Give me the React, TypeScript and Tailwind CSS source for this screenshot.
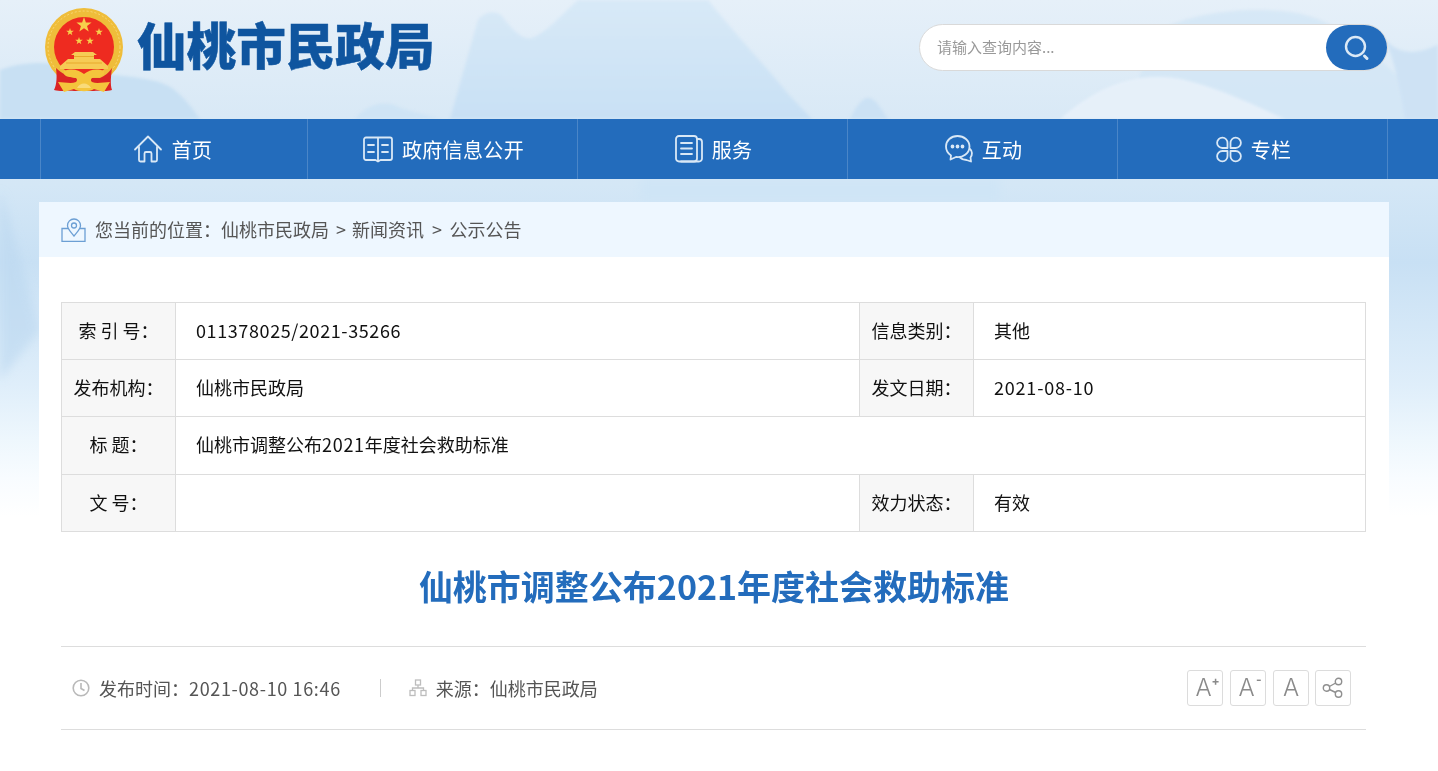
import type { ReactNode } from "react";

const font = "font-['Noto_Sans_CJK_SC','Noto_Sans',sans-serif]";

function Backdrop() {
  return (
    <svg className="absolute left-0 top-0 -z-10" width="1438" height="771" viewBox="0 0 1438 771">
      <defs>
        <linearGradient id="sky" x1="0" y1="0" x2="0" y2="1">
          <stop offset="0" stopColor="#e6f0f9" />
          <stop offset="0.15" stopColor="#d9e9f6" />
          <stop offset="0.24" stopColor="#d4e7f6" />
          <stop offset="0.34" stopColor="#c8e0f4" />
          <stop offset="0.5" stopColor="#dfeefa" />
          <stop offset="0.57" stopColor="#eef7fd" />
          <stop offset="0.62" stopColor="#f8fcff" />
          <stop offset="0.67" stopColor="#ffffff" />
        </linearGradient>
        <linearGradient id="peak" x1="0" y1="0" x2="0" y2="1">
          <stop offset="0" stopColor="#d8e9f7" />
          <stop offset="1" stopColor="#c8e0f4" />
        </linearGradient>
        <filter id="soft">
          <feGaussianBlur stdDeviation="1.5" />
        </filter>
        <filter id="softer">
          <feGaussianBlur stdDeviation="5" />
        </filter>
      </defs>
      <rect width="1438" height="771" fill="url(#sky)" />
      <g filter="url(#soft)">
        <path d="M0 70 C20 62 50 60 75 68 C110 78 150 74 172 88 C185 98 192 108 200 119 L0 119Z" fill="#c8e0f3" />
        <path d="M355 119 C365 106 385 98 400 108 L440 119Z" fill="#cfe4f5" />
        <path d="M450 119 L478 20 C484 12 495 10 502 16 C512 30 522 40 532 38 C548 32 562 14 578 0 L708 0 C730 28 760 60 790 96 L812 119Z" fill="url(#peak)" />
        <path d="M850 119 C856 106 862 98 868 98 C876 98 880 108 888 119Z" fill="#cbe1f4" />
        <path d="M1160 30 C1190 14 1240 6 1290 12 C1340 18 1385 60 1438 119 L1120 119 C1135 90 1145 60 1160 30Z" fill="#d2e5f5" opacity="0.75" />
        <path d="M1060 119 C1100 84 1140 70 1185 80 C1225 90 1255 106 1285 119Z" fill="#e6f0f9" />
        <path d="M1385 40 C1405 60 1425 50 1438 45 L1438 119 L1405 119 C1400 90 1395 60 1385 40Z" fill="#cee2f4" />
      </g>
      <path d="M0 190 C20 250 30 300 40 330 L0 380Z" fill="#bcd8f0" opacity="0.6" filter="url(#softer)" />
      <path d="M640 179 H1000 V202 H640Z" fill="#cfe5f6" filter="url(#softer)" />
    </svg>
  );
}

function Star({ x, y, r }: { x: number; y: number; r: number }) {
  const points = Array.from({ length: 10 }, (_, i) => {
    const a = -Math.PI / 2 + (i * Math.PI) / 5;
    const d = i % 2 === 0 ? r : r * 0.4;
    return `${x + d * Math.cos(a)},${y + d * Math.sin(a)}`;
  }).join(" ");
  return <polygon points={points} fill="#f7cf4b" />;
}

function Emblem() {
  return (
    <svg width="80" height="85" viewBox="0 0 80 85" className="shrink-0">
      <circle cx="40" cy="39" r="39" fill="#efbd3a" />
      <circle cx="40" cy="39" r="36" fill="none" stroke="#f9d978" strokeWidth="1" strokeDasharray="2 2" />
      <circle cx="40" cy="39" r="30" fill="#ee2b20" />
      <Star x={40} y={17} r={8} />
      <Star x={26} y={24} r={4} />
      <Star x={55} y={24} r={4} />
      <Star x={35} y={33} r={4} />
      <Star x={46} y={33} r={4} />
      {/* gate */}
      <path d="M27 47 L31 44 H49 L53 47 L50 47 V51 H56 L64 58 V61 H16 V58 L24 51 H30 V47Z" fill="#f6cb55" />
      <path d="M22 55 H58 M30 48.5 H50" stroke="#e8a92c" strokeWidth="1" />
      {/* ribbons */}
      <path d="M12 60 C18 66 24 68 30 70 L56 70 C60 68 64 66 68 60 C67 68 66 76 68 82 C60 84 56 82 50 83 H30 C24 82 18 84 10 82 C13 76 13 68 12 60Z" fill="#db2424" />
      {/* gold knot */}
      <path d="M20 63 C28 60 35 62 40 66 C45 62 52 60 60 63 C62 67 56 70 50 69 C47 70 46 72 48 74 C53 76 60 74 66 74 L60 84 L50 81 C46 84 34 84 30 81 L20 84 L14 74 C20 74 27 76 32 74 C34 72 33 70 30 69 C24 70 18 67 20 63Z" fill="#f4c53c" />
      <path d="M33 80 C36 74 44 74 47 80Z" fill="#f9db7a" />
    </svg>
  );
}

const stroke = { fill: "none", stroke: "#d9e8f6", strokeWidth: 1.8, strokeLinecap: "round" as const, strokeLinejoin: "round" as const };

function HomeIcon() {
  return (
    <svg width="30" height="30" viewBox="0 0 30 30" {...stroke}>
      <path d="M2 15.5 L15 2.5 L28 15.5" />
      <path d="M6 13 V26 a1.5 1.5 0 0 0 1.5 1.5 H11.5 V19.5 a1.5 1.5 0 0 1 1.5 -1.5 H17 a1.5 1.5 0 0 1 1.5 1.5 V27.5 H22.5 A1.5 1.5 0 0 0 24 26 V13" />
    </svg>
  );
}

function BookIcon() {
  return (
    <svg width="30" height="27" viewBox="0 0 30 27" {...stroke}>
      <path d="M3 1.5 H27 A2 2 0 0 1 29 3.5 V22 A2 2 0 0 1 27 24 H17.5 L15 25.5 L12.5 24 H3 A2 2 0 0 1 1 22 V3.5 A2 2 0 0 1 3 1.5Z M15 1.5 V25" />
      <path d="M5 9 H11 M5 16 H11 M19 9 H25 M19 16 H25" />
    </svg>
  );
}

function DocIcon() {
  return (
    <svg width="28" height="28" viewBox="0 0 28 28" {...stroke}>
      <rect x="1" y="1" width="21" height="25.5" rx="3" />
      <path d="M22 4 H24 A3 3 0 0 1 27 7 V23.5 A3 3 0 0 1 24 26.5 H6" />
      <path d="M6 8 H17 M6 13.5 H17 M6 19 H17" />
    </svg>
  );
}

function ChatIcon() {
  return (
    <svg width="28" height="28" viewBox="0 0 28 28" {...stroke}>
      <path d="M12.5 1 C6 1 1 5.5 1 11.5 C1 15.5 3 18.5 6 20.5 L5.5 24.5 L11 22 C17.5 23 24.5 18.5 24.5 11.5 C24.5 5.5 19 1 12.5 1Z" />
      <path d="M25 14 C27.5 16 27.5 20 25.5 22.5 L26 26.5 L21.5 25 C19 25 16.5 24 15 22.5" />
      <circle cx="7.5" cy="11.5" r="1" fill="#d9e8f6" />
      <circle cx="12.5" cy="11.5" r="1" fill="#d9e8f6" />
      <circle cx="17.5" cy="11.5" r="1" fill="#d9e8f6" />
    </svg>
  );
}

function CloverIcon() {
  return (
    <svg width="26" height="27" viewBox="0 0 26 27" {...stroke}>
      <path d="M11.5 12 V7 A5.2 5.2 0 1 0 6.3 12Z" />
      <path d="M14.5 12 V7 A5.2 5.2 0 1 1 19.7 12Z" />
      <path d="M11.5 15 V20 A5.2 5.2 0 1 1 6.3 15Z" />
      <path d="M14.5 15 V20 A5.2 5.2 0 1 0 19.7 15Z" />
    </svg>
  );
}

function SearchIcon() {
  return (
    <svg width="26" height="26" viewBox="0 0 26 26" fill="none" stroke="#dbe9f6" strokeLinecap="round">
      <circle cx="11.5" cy="11.5" r="9.5" strokeWidth="2.4" />
      <path d="M20.5 21 L23 23.5" strokeWidth="3" />
    </svg>
  );
}

function PinIcon() {
  return (
    <svg width="25" height="24" viewBox="0 0 25 24" fill="none" stroke="#6c9fd4" strokeWidth="1.3">
      <path d="M7 10.5 H1 V23.5 H24 V10.5 H19" />
      <path d="M13 1 A6.5 6.5 0 0 0 6.5 7.5 C6.5 11.5 10.5 14.5 13 18 C15.5 14.5 19.5 11.5 19.5 7.5 A6.5 6.5 0 0 0 13 1Z" fill="#eef7ff" />
      <circle cx="13" cy="7.5" r="2.5" />
    </svg>
  );
}

function ClockIcon() {
  return (
    <svg width="18" height="18" viewBox="0 0 18 18" fill="none" stroke="#b9b9b9" strokeWidth="1.6">
      <circle cx="9" cy="9" r="7.8" />
      <path d="M9 4 V9.5 L12.5 11.5" />
    </svg>
  );
}

function TreeIcon() {
  return (
    <svg width="18" height="18" viewBox="0 0 18 18" fill="none" stroke="#bdbdbd" strokeWidth="1.3">
      <rect x="6.5" y="1" width="5" height="5" />
      <rect x="1" y="11.5" width="5" height="5" />
      <rect x="12" y="11.5" width="5" height="5" />
      <path d="M9 6 V9 M3.5 11.5 V9 H14.5 V11.5" />
    </svg>
  );
}

function ShareIcon() {
  return (
    <svg width="22" height="22" viewBox="0 0 22 22" fill="none" stroke="#8f8f8f" strokeWidth="1.4">
      <circle cx="16.5" cy="4.5" r="3.2" />
      <circle cx="4.5" cy="11" r="3.2" />
      <circle cx="16.5" cy="17" r="3.2" />
      <path d="M7.4 9.5 L13.7 6 M7.4 12.5 L13.7 15.5" />
    </svg>
  );
}

const navItems = [
  { label: "首页", icon: <HomeIcon /> },
  { label: "政府信息公开", icon: <BookIcon /> },
  { label: "服务", icon: <DocIcon /> },
  { label: "互动", icon: <ChatIcon /> },
  { label: "专栏", icon: <CloverIcon /> },
];

function LabelCell({ children }: { children: ReactNode }) {
  return (
    <td className="border border-[#dddddd] bg-[#f7f7f7] text-center text-[18px] pb-[2px]">
      {children}
    </td>
  );
}

function ValueCell({ children, span }: { children?: ReactNode; span?: number }) {
  return (
    <td colSpan={span} className="border border-[#dddddd] pl-5 pb-[2px] text-[18px]">
      {children}
    </td>
  );
}

function FontButton({ children, className = "" }: { children: ReactNode; className?: string }) {
  return (
    <button className={`w-9 h-9 rounded-[3px] border border-[#dcdcdc] flex items-center justify-center text-[#8a8a8a] font-['Inter',sans-serif] ${className}`}>
      {children}
    </button>
  );
}

export default function App() {
  return (
    <div className={`relative isolate w-[1438px] h-[771px] overflow-hidden ${font}`}>
      <Backdrop />

      {/* Header */}
      <header className="h-[119px] flex items-start justify-between pl-11 pr-[50px]">
        <div className="flex items-start pt-2">
          <Emblem />
          <h1 className="ml-[13px] mt-[3px] text-[49.6px] leading-[64px] font-black text-[#0f559f] [-webkit-text-stroke:0.5px_#0f559f] whitespace-nowrap">仙桃市民政局</h1>
        </div>
        <div className="mt-6 w-[469px] h-[47px] bg-white rounded-full border border-[#d9d9d9] flex items-center justify-between pl-[17px]">
          <span className="text-[15px] text-[#999999]">请输入查询内容...</span>
          <button className="w-[61px] h-[45px] rounded-full bg-[#236cbc] flex items-center justify-center">
            <SearchIcon />
          </button>
        </div>
      </header>

      {/* Nav */}
      <nav className="h-[60px] bg-[#236cbc] pl-10">
        <div className="flex h-full w-[1348px] border-r border-[#4a86c8]">
          {navItems.map((item, i) => (
            <a
              key={item.label}
              className={`h-full flex items-center justify-center gap-[9px] text-white text-[20px] tracking-[0.35px] border-l border-[#4a86c8] ${i === 0 ? "w-[267px] pr-[3px]" : "w-[270px] pl-[2px]"}`}
            >
              {item.icon}
              <span className="mt-[2px]">{item.label}</span>
            </a>
          ))}
        </div>
      </nav>

      {/* Main */}
      <main className="mt-[23px] mx-[39px] w-[1350px] bg-white">
        <div className="h-[55px] bg-[#eef7ff] flex items-center pl-[22px] text-[18px] text-[#555555]">
          <PinIcon />
          <span className="ml-[9px]">您当前的位置：</span>
          <span>仙桃市民政局</span>
          <span className="ml-[7px] mr-[6px]">&gt;</span>
          <span>新闻资讯</span>
          <span className="ml-[8px] mr-[7.5px]">&gt;</span>
          <span>公示公告</span>
        </div>

        <div className="px-[22px] pt-[45px]">
          <table className="w-[1305px] table-fixed border-collapse text-[#111111]">
            <colgroup>
              <col className="w-[114px]" />
              <col className="w-[684px]" />
              <col className="w-[114px]" />
              <col />
            </colgroup>
            <tbody>
              <tr className="h-[57px]">
                <LabelCell>索 引 号：</LabelCell>
                <ValueCell><span className="tracking-[0.6px]">011378025/2021-35266</span></ValueCell>
                <LabelCell>信息类别：</LabelCell>
                <ValueCell>其他</ValueCell>
              </tr>
              <tr className="h-[57px]">
                <LabelCell>发布机构：</LabelCell>
                <ValueCell>仙桃市民政局</ValueCell>
                <LabelCell>发文日期：</LabelCell>
                <ValueCell><span className="tracking-[0.8px]">2021-08-10</span></ValueCell>
              </tr>
              <tr className="h-[58px]">
                <LabelCell>标 题：</LabelCell>
                <ValueCell span={3}>仙桃市调整公布<span className="tracking-[0.7px]">2021</span>年度社会救助标准</ValueCell>
              </tr>
              <tr className="h-[57px]">
                <LabelCell>文 号：</LabelCell>
                <ValueCell />
                <LabelCell>效力状态：</LabelCell>
                <ValueCell>有效</ValueCell>
              </tr>
            </tbody>
          </table>

          <h2 className="mt-[30px] h-[48px] text-center text-[34px] leading-[48px] font-bold text-[#236cbc]">
            仙桃市调整公布2021年度社会救助标准
          </h2>

          <div className="mt-[36px] w-[1305px] h-[84px] border-y border-[#dddddd] flex items-center justify-between pl-[11px] pr-[15px] text-[18px] text-[#555555]">
            <div className="flex items-center">
              <ClockIcon />
              <span className="ml-[9px]">发布时间：<span className="tracking-[0.65px]">2021-08-10 16:46</span></span>
              <span className="ml-[39px] h-[18px] w-px bg-[#cccccc]" />
              <span className="ml-[28px]"><TreeIcon /></span>
              <span className="ml-[9px]">来源：仙桃市民政局</span>
            </div>
            <div className="flex items-center">
              <FontButton><span className="text-[24px] font-light leading-none relative -ml-[3px]">A<span className="absolute -right-[8px] -top-[1px] text-[12px] font-bold leading-none">+</span></span></FontButton>
              <FontButton className="ml-[7px]"><span className="text-[24px] font-light leading-none relative -ml-[3px]">A<span className="absolute -right-[7px] -top-[2px] text-[12px] font-bold leading-none">-</span></span></FontButton>
              <FontButton className="ml-[7px]"><span className="text-[24px] font-light leading-none">A</span></FontButton>
              <FontButton className="ml-[6px]"><ShareIcon /></FontButton>
            </div>
          </div>
        </div>
      </main>
    </div>
  );
}
